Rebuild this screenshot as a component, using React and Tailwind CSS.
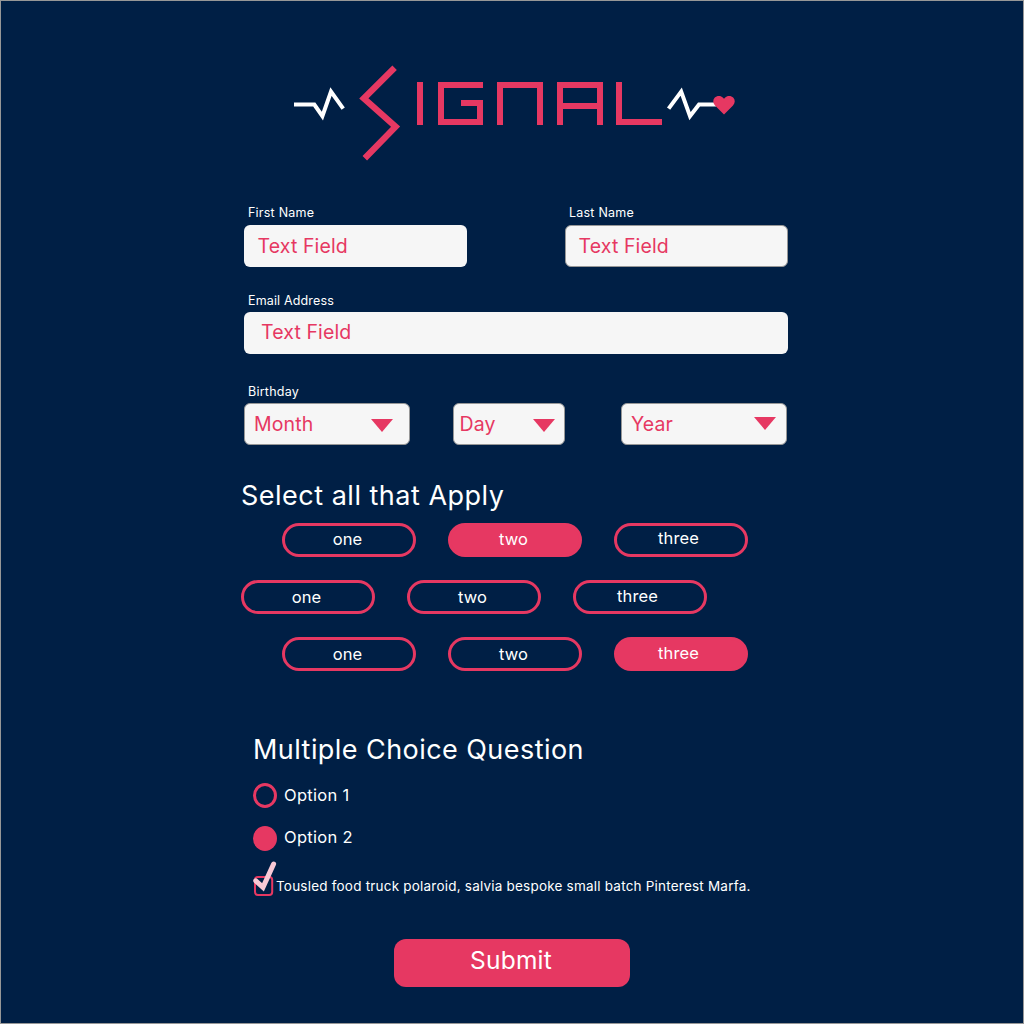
import React from "react";

function Logo() {
  return (
    <div role="img" aria-label="Signal" className="ml-[50px] flex h-[96px] w-[444px] items-start">
      <svg viewBox="293 65 110 96" className="h-[96px] w-[110px] shrink-0" fill="none">
        <path d="M294 104.5H314.3L322.4 116.2L331 91.6L343.2 108.6" stroke="#fff" strokeWidth="4" />
        <path d="M394.6 67.8L363.8 98.4L395.6 126.7L364.8 158.2" stroke="#e63862" strokeWidth="6.3" />
      </svg>
      <div className="mt-[17px] ml-[14px] flex h-[43px] shrink-0">
        <div className="w-[6px] bg-[#e63862]" />
        <div className="ml-[15px] flex w-[45px] items-end justify-end border-y-6 border-l-6 border-[#e63862]">
          <div className="-mb-[6px] h-[25px] w-[22px] border-t-6 border-r-6 border-[#e63862]" />
        </div>
        <div className="ml-[14px] w-[46px] border-x-6 border-t-6 border-[#e63862]" />
        <div className="ml-[14px] w-[46px] border-x-6 border-t-6 border-[#e63862] pt-[15px]">
          <div className="h-[6px] bg-[#e63862]" />
        </div>
        <div className="ml-[13px] w-[46px] border-b-6 border-l-6 border-[#e63862]" />
      </div>
      <svg viewBox="666 65 70 96" className="ml-[4px] h-[96px] w-[70px] shrink-0" fill="none">
        <path d="M668.6 108.6L681.2 91.6L690 116.2L699 104.5H716" stroke="#fff" strokeWidth="4" />
        <path
          d="M724 114.6L715 105.4C712.8 103 712.7 99.8 714.6 97.8C717 95.4 720.8 95.4 723 97.8L724 98.8L725 97.8C727.2 95.4 731 95.4 733.4 97.8C735.3 99.8 735.2 103 733 105.4Z"
          fill="#e63862"
        />
      </svg>
    </div>
  );
}

function Label({ className = "", children }) {
  return (
    <div className={`relative top-px ml-1 h-4 text-[12.5px] leading-4 whitespace-nowrap ${className}`}>{children}</div>
  );
}

const field = "flex h-[42px] items-center rounded-[6px] bg-[#f6f6f6] text-[19.5px] tracking-[0.12px] text-[#e63862]";

function Dropdown({ label, className, arrow = "" }) {
  return (
    <div className={`${field} justify-between border border-[#979797] ${className}`}>
      <span className="pt-[2px]">{label}</span>
      <svg viewBox="0 0 22 13" className={`h-[13px] w-[22px] ${arrow}`}>
        <path d="M0 0H22L11 13Z" fill="#e63862" />
      </svg>
    </div>
  );
}

function Pill({ label, selected, raised }) {
  return (
    <div
      className={`flex h-[34px] w-[134px] justify-center rounded-full border-3 border-[#e63862] text-[16.5px] tracking-[0.12px] ${
        selected ? "bg-[#e63862]" : ""
      } ${label === "three" ? "pr-[5px] leading-[26px]" : "pr-[3px] leading-7"}`}
    >
      <span className={raised ? "-mt-px" : ""}>{label}</span>
    </div>
  );
}

function PillRow({ selected, raised, className }) {
  return (
    <div className={`flex gap-8 ${className}`}>
      {["one", "two", "three"].map((n) => (
        <Pill key={n} label={n} selected={n === selected} raised={raised} />
      ))}
    </div>
  );
}

export default function App() {
  return (
    <main className="h-[1024px] w-[1024px] overflow-hidden border border-[#979797] bg-[#001f45] pt-16 pl-[242px] font-['Inter',sans-serif] text-white">
      <Logo />

      <div className="mt-[43px] ml-px flex w-[544px] justify-between">
        <div>
          <Label className="tracking-[0.22px]">First Name</Label>
          <div className={`${field} mt-[5px] w-[223px] pt-[2px] pl-[13.5px]`}>Text Field</div>
        </div>
        <div>
          <Label className="tracking-[0.22px]">Last Name</Label>
          <div className={`${field} mt-[5px] w-[223px] border border-[#979797] pt-[2px] pl-[12.5px]`}>Text Field</div>
        </div>
      </div>

      <div className="mt-[25px] ml-px">
        <Label className="tracking-[0.15px]">Email Address</Label>
        <div className={`${field} mt-1 w-[544px] pl-[17px]`}>Text Field</div>
      </div>

      <div className="mt-[29px] ml-px">
        <Label className="tracking-[0.25px]">Birthday</Label>
        <div className="mt-1 flex">
          <Dropdown label="Month" className="w-[166px] pr-4 pl-[9px]" arrow="mt-[2px]" />
          <Dropdown label="Day" className="ml-[43px] w-[112px] pr-[9px] pl-[5.5px]" arrow="mt-[2px]" />
          <Dropdown label="Year" className="ml-14 w-[166px] pr-[10px] pl-[9px]" arrow="-mt-px" />
        </div>
      </div>

      <h2 className="mt-[32px] -ml-[2px] h-9 text-[27px] leading-[38px] tracking-[0.5px] whitespace-nowrap">
        Select all that Apply
      </h2>
      <PillRow selected="two" raised className="mt-[10px] ml-[39px]" />
      <PillRow className="mt-[23px] -ml-[2px]" />
      <PillRow selected="three" className="mt-[23px] ml-[39px]" />

      <h2 className="mt-[60px] ml-[10px] h-9 text-[27px] leading-[38px] tracking-[0.44px] whitespace-nowrap">
        Multiple Choice Question
      </h2>
      <div className="mt-4 ml-[10px] flex h-[25px] items-center gap-[7px] text-[16.5px] tracking-[0.3px]">
        <span className="h-[25px] w-[24px] rounded-[50%] border-3 border-[#e63862]" />
        <span>Option 1</span>
      </div>
      <div className="mt-[18px] ml-[10px] flex h-[25px] items-center gap-[7px] text-[16.5px] tracking-[0.3px]">
        <span className="h-[25px] w-[24px] rounded-[50%] bg-[#e63862]" />
        <span className="-mt-[2px]">Option 2</span>
      </div>
      <div className="mt-[9px] ml-[10px] flex h-[38px] items-start">
        <svg viewBox="253 860 24 38" className="h-[38px] w-[24px]" fill="none">
          <rect x="255" y="877" width="17.2" height="18" rx="3" stroke="#e63862" strokeWidth="2" />
          <path d="M255.8 880.8L263 887.4L273.6 864" stroke="#f9c9d6" strokeWidth="5" strokeLinecap="round" />
        </svg>
        <span className="mt-[16px] -ml-px text-[13.5px] leading-5 tracking-[0.21px] whitespace-nowrap">
          Tousled food truck polaroid, salvia bespoke small batch Pinterest Marfa.
        </span>
      </div>

      <button className="mt-[41px] ml-[151px] flex h-[48px] w-[236px] justify-center rounded-[12px] bg-[#e63862] pr-[2px] text-[24.5px] leading-[43px] tracking-[0.25px]">
        Submit
      </button>
    </main>
  );
}
